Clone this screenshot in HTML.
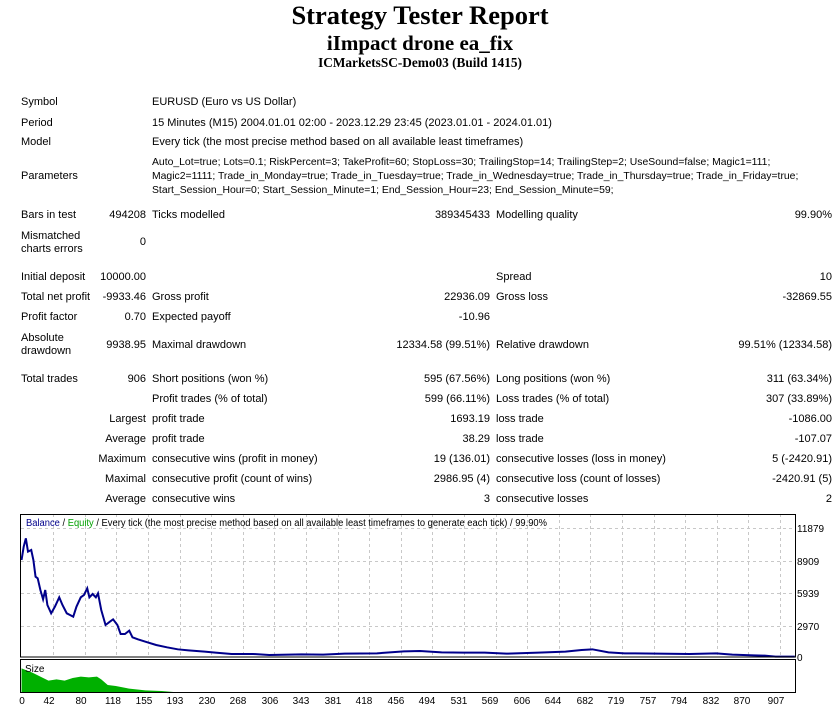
<!DOCTYPE html>
<html><head><meta charset="utf-8"><style>
body{margin:0;width:840px;height:709px;background:#fff;position:relative;overflow:hidden;font-family:"Liberation Sans",sans-serif;font-size:11px;color:#000}
.t{position:absolute;white-space:nowrap;line-height:12px}
.h{position:absolute;left:0;width:840px;text-align:center;font-family:"Liberation Serif",serif;font-weight:bold;white-space:nowrap}
</style></head><body>
<div class="h" style="top:0;font-size:26.5px;line-height:30px">Strategy Tester Report</div>
<div class="h" style="top:31px;font-size:21px;line-height:24px">iImpact drone ea_fix</div>
<div class="h" style="top:55px;font-size:13.3px;line-height:16px">ICMarketsSC-Demo03 (Build 1415)</div>

<div class="t" style="left:21px;top:96px">Symbol</div>
<div class="t" style="left:152px;top:96px">EURUSD (Euro vs US Dollar)</div>
<div class="t" style="left:21px;top:117px">Period</div>
<div class="t" style="left:152px;top:117px">15 Minutes (M15) 2004.01.01 02:00 - 2023.12.29 23:45 (2023.01.01 - 2024.01.01)</div>
<div class="t" style="left:21px;top:136px">Model</div>
<div class="t" style="left:152px;top:136px">Every tick (the most precise method based on all available least timeframes)</div>
<div class="t" style="left:21px;top:170px">Parameters</div>
<div class="t" style="left:152px;top:156px;line-height:14px;font-size:10.4px">Auto_Lot=true; Lots=0.1; RiskPercent=3; TakeProfit=60; StopLoss=30; TrailingStop=14; TrailingStep=2; UseSound=false; Magic1=111;<br>Magic2=1111; Trade_in_Monday=true; Trade_in_Tuesday=true; Trade_in_Wednesday=true; Trade_in_Thursday=true; Trade_in_Friday=true;<br>Start_Session_Hour=0; Start_Session_Minute=1; End_Session_Hour=23; End_Session_Minute=59;</div>

<div class="t" style="left:21px;top:209px">Bars in test</div>
<div class="t" style="right:694px;top:209px">494208</div>
<div class="t" style="left:152px;top:209px">Ticks modelled</div>
<div class="t" style="right:350px;top:209px">389345433</div>
<div class="t" style="left:496px;top:209px">Modelling quality</div>
<div class="t" style="right:8px;top:209px">99.90%</div>

<div class="t" style="left:21px;top:230px;line-height:13px">Mismatched<br>charts errors</div>
<div class="t" style="right:694px;top:236px">0</div>

<div class="t" style="left:21px;top:271px">Initial deposit</div>
<div class="t" style="right:694px;top:271px">10000.00</div>
<div class="t" style="left:496px;top:271px">Spread</div>
<div class="t" style="right:8px;top:271px">10</div>

<div class="t" style="left:21px;top:291px">Total net profit</div>
<div class="t" style="right:694px;top:291px">-9933.46</div>
<div class="t" style="left:152px;top:291px">Gross profit</div>
<div class="t" style="right:350px;top:291px">22936.09</div>
<div class="t" style="left:496px;top:291px">Gross loss</div>
<div class="t" style="right:8px;top:291px">-32869.55</div>

<div class="t" style="left:21px;top:311px">Profit factor</div>
<div class="t" style="right:694px;top:311px">0.70</div>
<div class="t" style="left:152px;top:311px">Expected payoff</div>
<div class="t" style="right:350px;top:311px">-10.96</div>

<div class="t" style="left:21px;top:332px;line-height:13px">Absolute<br>drawdown</div>
<div class="t" style="right:694px;top:339px">9938.95</div>
<div class="t" style="left:152px;top:339px">Maximal drawdown</div>
<div class="t" style="right:350px;top:339px">12334.58 (99.51%)</div>
<div class="t" style="left:496px;top:339px">Relative drawdown</div>
<div class="t" style="right:8px;top:339px">99.51% (12334.58)</div>

<div class="t" style="left:21px;top:373px">Total trades</div>
<div class="t" style="right:694px;top:373px">906</div>
<div class="t" style="left:152px;top:373px">Short positions (won %)</div>
<div class="t" style="right:350px;top:373px">595 (67.56%)</div>
<div class="t" style="left:496px;top:373px">Long positions (won %)</div>
<div class="t" style="right:8px;top:373px">311 (63.34%)</div>

<div class="t" style="left:152px;top:393px">Profit trades (% of total)</div>
<div class="t" style="right:350px;top:393px">599 (66.11%)</div>
<div class="t" style="left:496px;top:393px">Loss trades (% of total)</div>
<div class="t" style="right:8px;top:393px">307 (33.89%)</div>

<div class="t" style="right:694px;top:413px">Largest</div>
<div class="t" style="left:152px;top:413px">profit trade</div>
<div class="t" style="right:350px;top:413px">1693.19</div>
<div class="t" style="left:496px;top:413px">loss trade</div>
<div class="t" style="right:8px;top:413px">-1086.00</div>

<div class="t" style="right:694px;top:433px">Average</div>
<div class="t" style="left:152px;top:433px">profit trade</div>
<div class="t" style="right:350px;top:433px">38.29</div>
<div class="t" style="left:496px;top:433px">loss trade</div>
<div class="t" style="right:8px;top:433px">-107.07</div>

<div class="t" style="right:694px;top:453px">Maximum</div>
<div class="t" style="left:152px;top:453px">consecutive wins (profit in money)</div>
<div class="t" style="right:350px;top:453px">19 (136.01)</div>
<div class="t" style="left:496px;top:453px">consecutive losses (loss in money)</div>
<div class="t" style="right:8px;top:453px">5 (-2420.91)</div>

<div class="t" style="right:694px;top:473px">Maximal</div>
<div class="t" style="left:152px;top:473px">consecutive profit (count of wins)</div>
<div class="t" style="right:350px;top:473px">2986.95 (4)</div>
<div class="t" style="left:496px;top:473px">consecutive loss (count of losses)</div>
<div class="t" style="right:8px;top:473px">-2420.91 (5)</div>

<div class="t" style="right:694px;top:493px">Average</div>
<div class="t" style="left:152px;top:493px">consecutive wins</div>
<div class="t" style="right:350px;top:493px">3</div>
<div class="t" style="left:496px;top:493px">consecutive losses</div>
<div class="t" style="right:8px;top:493px">2</div>

<svg style="position:absolute;left:0;top:510px" width="840" height="199" viewBox="0 0 840 199">
<g stroke="#c8c8c8" stroke-width="1" stroke-dasharray="3,3" fill="none">
<line x1="21" y1="18.5" x2="796" y2="18.5"/><line x1="21" y1="51.5" x2="796" y2="51.5"/><line x1="21" y1="83.5" x2="796" y2="83.5"/><line x1="21" y1="116.5" x2="796" y2="116.5"/>
<path d="M53.5 4V147M85.5 4V147M116.5 4V147M148.5 4V147M180.5 4V147M211.5 4V147M243.5 4V147M274.5 4V147M306.5 4V147M338.5 4V147M369.5 4V147M401.5 4V147M432.5 4V147M464.5 4V147M496.5 4V147M527.5 4V147M559.5 4V147M590.5 4V147M622.5 4V147M654.5 4V147M685.5 4V147M717.5 4V147M748.5 4V147M780.5 4V147"/>
</g>
<g transform="scale(0.5385,0.3333)">
<polygon fill="#00b000" points="40,548 40,475 60,488 75,500 90,512 105,508 120,512 135,504 150,500 165,502 180,500 188,508 200,525 215,528 240,536 270,541 300,543 322,546 322,548"/>
<polyline fill="none" stroke="#00008b" stroke-width="2" vector-effect="non-scaling-stroke" points="40,150 44,110 48,85 52,125 58,120 62,150 66,200 70,205 75,240 80,268 84,240 88,285 95,310 102,290 110,262 116,285 124,310 130,315 136,320 142,290 150,262 156,255 162,235 166,262 172,252 178,262 182,250 188,300 196,345 204,335 210,328 218,345 224,372 232,372 240,362 246,382 256,388 270,395 290,405 310,412 330,418 350,421 380,425 400,428 430,432 470,432 500,435 560,433 600,434 640,431 700,430 750,424 780,423 820,427 860,428 900,428 940,431 1000,428 1050,425 1080,420 1100,418 1130,427 1160,430 1220,431 1280,432 1330,430 1360,434 1400,436 1420,437 1440,440 1476,440"/>
</g>
<g fill="none" stroke="#000" stroke-width="1">
<rect x="20.5" y="4.5" width="775" height="142.5"/>
<rect x="20.5" y="149.5" width="775" height="33"/>
</g>
<g font-family="Liberation Sans,sans-serif" font-size="10" fill="#000">
<text x="26" y="16" textLength="521" lengthAdjust="spacingAndGlyphs"><tspan fill="#00008b">Balance</tspan> / <tspan fill="#00a000">Equity</tspan> / Every tick (the most precise method based on all available least timeframes to generate each tick) / 99.90%</text>
<text x="25" y="162">Size</text>
<text x="797" y="22">11879</text><text x="797" y="55">8909</text><text x="797" y="87">5939</text><text x="797" y="120">2970</text><text x="797" y="151">0</text>
</g>
<g font-family="Liberation Sans,sans-serif" font-size="10" fill="#000" text-anchor="middle">
<text x="22" y="194">0</text><text x="49" y="194">42</text><text x="81" y="194">80</text><text x="113" y="194">118</text><text x="144" y="194">155</text><text x="175" y="194">193</text><text x="207" y="194">230</text><text x="238" y="194">268</text><text x="270" y="194">306</text><text x="301" y="194">343</text><text x="333" y="194">381</text><text x="364" y="194">418</text><text x="396" y="194">456</text><text x="427" y="194">494</text><text x="459" y="194">531</text><text x="490" y="194">569</text><text x="522" y="194">606</text><text x="553" y="194">644</text><text x="585" y="194">682</text><text x="616" y="194">719</text><text x="648" y="194">757</text><text x="679" y="194">794</text><text x="711" y="194">832</text><text x="742" y="194">870</text><text x="776" y="194">907</text>
</g>
</svg>
</body></html>
